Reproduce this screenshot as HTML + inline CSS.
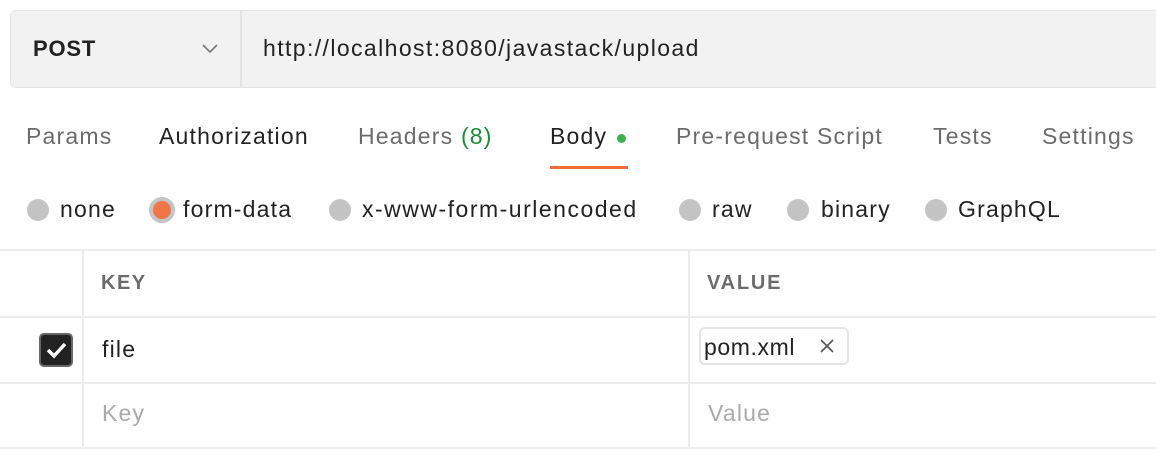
<!DOCTYPE html>
<html><head><style>
body{margin:0;width:1156px;height:466px;background:#fff;font-family:"Liberation Sans",sans-serif;position:relative;overflow:hidden}
.a{position:absolute;white-space:nowrap}
.url{position:absolute;left:10px;top:10px;width:1160px;height:78px;background:#f2f2f2;border:1px solid #e4e4e4;border-radius:6px;box-sizing:border-box}
.t{font-size:23px;letter-spacing:1.2px}
.tab{position:absolute;top:123px;color:#6b6b6b;white-space:nowrap}
.r{position:absolute;top:199px;width:22px;height:22px;border-radius:50%;background:#c4c4c4}
.rl{position:absolute;top:196px;color:#222;white-space:nowrap}
.h{position:absolute;height:2px;background:#ececec;left:0;width:1156px}
.v{position:absolute;width:2px;background:#ececec;top:251px;height:197px}
</style></head><body>
<div class="url"></div>
<div style="position:absolute;left:240px;top:11px;width:2px;height:76px;background:#e4e4e4"></div>
<div class="a" style="left:33px;top:36px;font-size:22px;font-weight:bold;color:#222;letter-spacing:0.8px">POST</div>
<svg class="a" style="left:201px;top:43px" width="18" height="12"><path d="M2 2l7 7 7-7" fill="none" stroke="#777" stroke-width="1.6"/></svg>
<div class="a t" style="left:263px;top:35px;color:#222;letter-spacing:1.4px">http://localhost:8080/javastack/upload</div>
<div class="tab t" style="left:26px">Params</div>
<div class="tab t" style="left:159px;color:#222">Authorization</div>
<div class="tab t" style="left:358px">Headers <span style="color:#1f8a3a">(8)</span></div>
<div class="tab t" style="left:550px;color:#222">Body</div>
<div class="a" style="left:617px;top:134px;width:9px;height:9px;border-radius:50%;background:#3cb34a"></div>
<div class="a" style="left:550px;top:166px;width:78px;height:3px;background:#f26b3a"></div>
<div class="tab t" style="left:676px">Pre-request Script</div>
<div class="tab t" style="left:933px">Tests</div>
<div class="tab t" style="left:1042px">Settings</div>
<div class="r" style="left:27px"></div><div class="rl t" style="left:60px">none</div>
<div class="r" style="left:149px;width:26px;height:26px;top:197px;box-sizing:border-box;border:4px solid #c4c4c4;background:#ef7546"></div><div class="rl t" style="left:183px">form-data</div>
<div class="r" style="left:329px"></div><div class="rl t" style="left:362px;letter-spacing:1.5px">x-www-form-urlencoded</div>
<div class="r" style="left:679px"></div><div class="rl t" style="left:712px">raw</div>
<div class="r" style="left:787px"></div><div class="rl t" style="left:821px">binary</div>
<div class="r" style="left:925px"></div><div class="rl t" style="left:958px">GraphQL</div>
<div class="h" style="top:249px"></div>
<div class="h" style="top:316px"></div>
<div class="h" style="top:382px"></div>
<div class="h" style="top:447px"></div>
<div class="v" style="left:82px"></div>
<div class="v" style="left:688px"></div>
<div class="a" style="left:101px;top:272px;font-size:20px;font-weight:bold;color:#6b6b6b;letter-spacing:1.5px">KEY</div>
<div class="a" style="left:707px;top:272px;font-size:20px;font-weight:bold;color:#6b6b6b;letter-spacing:1.8px">VALUE</div>
<div class="a" style="left:39px;top:333px;width:34px;height:34px;box-sizing:border-box;border-radius:5px;background:#222;border:2px solid #666"></div>
<svg class="a" style="left:39px;top:333px" width="34" height="34"><path d="M9 17l6 6 11-12" fill="none" stroke="#fff" stroke-width="3.5"/></svg>
<div class="a t" style="left:102px;top:336px;color:#222">file</div>
<div class="a" style="left:699px;top:327px;width:150px;height:38px;box-sizing:border-box;border:2px solid #e4e4e4;border-radius:6px"></div>
<div class="a t" style="left:704px;top:334px;color:#222;letter-spacing:0.6px">pom.xml</div>
<svg class="a" style="left:819px;top:338px" width="16" height="16"><path d="M2 2l12 12M14 2L2 14" stroke="#555" stroke-width="1.6"/></svg>
<div class="a t" style="left:102px;top:400px;color:#aaa">Key</div>
<div class="a t" style="left:708px;top:400px;color:#aaa">Value</div>
</body></html>
